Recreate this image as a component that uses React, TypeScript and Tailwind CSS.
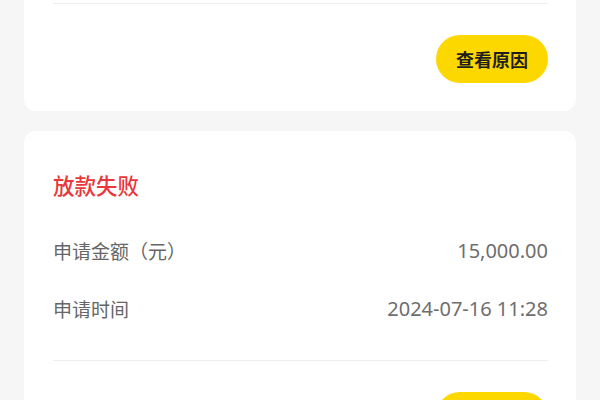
const cjk = { fontFamily: '"Noto Sans CJK SC", "Noto Sans", sans-serif' };
const num = { fontFamily: '"Noto Sans", "Noto Sans CJK SC", sans-serif' };

const ReasonButton = () => (
  <div className="mt-[31px] flex justify-end">
    <button
      className="h-12 px-5 rounded-full bg-[#fdd700] text-[18px] font-bold text-[#1e1e1e]"
      style={cjk}
    >
      查看原因
    </button>
  </div>
);

const InfoRow = ({ label, value }: { label: string; value: string }) => (
  <div className="flex items-center justify-between h-[28px]">
    <span className="text-[19px] text-[#666]" style={cjk}>
      {label}
    </span>
    <span className="text-[20px] text-[#6e6e6e]" style={num}>
      {value}
    </span>
  </div>
);

const LoanCard = ({ status, amount, time }: { status: string; amount: string; time: string }) => {
  return (
    <div className="bg-white rounded-xl pl-[29px] pr-[28px] pt-[39px] pb-[28px]">
      <p className="text-[21.5px] leading-[30px] font-medium text-[#e8383b]" style={cjk}>
        {status}
      </p>
      <div className="mt-[37px] flex flex-col gap-[30px]">
        <InfoRow label="申请金额（元）" value={amount} />
        <InfoRow label="申请时间" value={time} />
      </div>
      <div className="mt-[37px] h-px bg-[#eeeeee]" />
      <ReasonButton />
    </div>
  );
};

export default function App() {
  return (
    <div className="w-[600px] h-[400px] overflow-hidden bg-[#f6f6f6]">
      <div className="px-6 flex flex-col gap-5">
        {/* previous card, scrolled so only its footer shows */}
        <div className="bg-white rounded-b-xl pl-[29px] pr-[28px] pt-[3px] pb-[28px]">
          <div className="h-px bg-[#eeeeee]" />
          <ReasonButton />
        </div>
        <LoanCard status="放款失败" amount="15,000.00" time="2024-07-16 11:28" />
      </div>
    </div>
  );
}
